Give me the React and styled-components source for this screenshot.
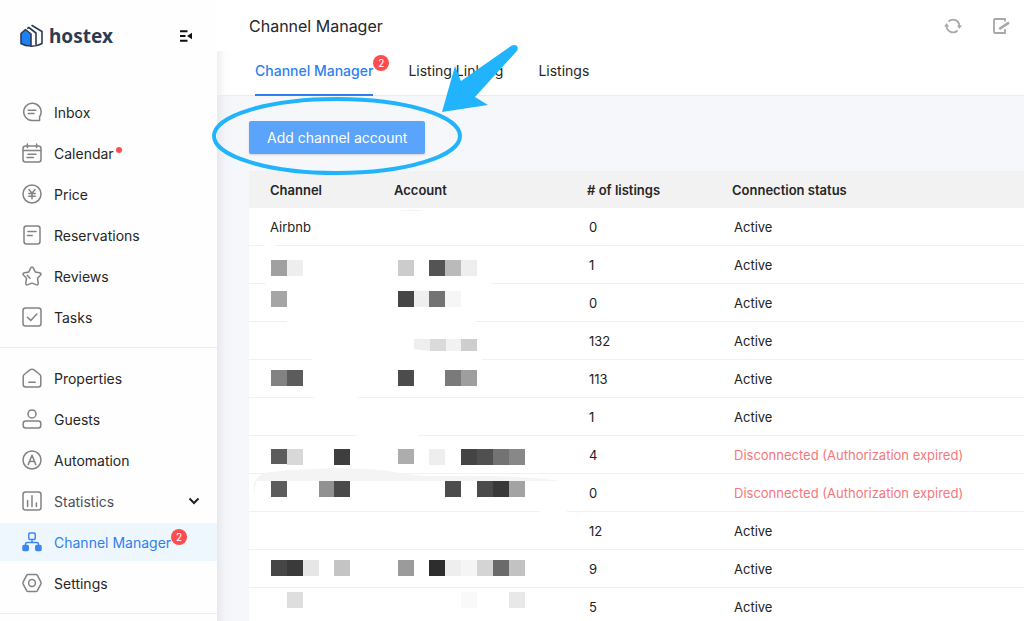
import React from 'react'
import styled, { createGlobalStyle } from 'styled-components'

const mainMenu = [
    { label: 'Inbox', icon: 'inbox' },
    { label: 'Calendar', icon: 'calendar', dot: true },
    { label: 'Price', icon: 'price' },
    { label: 'Reservations', icon: 'reservations' },
    { label: 'Reviews', icon: 'reviews' },
    { label: 'Tasks', icon: 'tasks' },
]

const manageMenu = [
    { label: 'Properties', icon: 'properties' },
    { label: 'Guests', icon: 'guests' },
    { label: 'Automation', icon: 'automation' },
    { label: 'Statistics', icon: 'statistics', expandable: true },
    { label: 'Channel Manager', icon: 'channel', active: true, count: 2 },
    { label: 'Settings', icon: 'settings' },
]

const rows = [
    { channel: 'Airbnb', listings: 0 },
    { listings: 1 },
    { listings: 0 },
    { listings: 132 },
    { listings: 113 },
    { listings: 1 },
    { listings: 4, expired: true },
    { listings: 0, expired: true },
    { listings: 12 },
    { listings: 9 },
    { listings: 5 },
]

// masked names: [x, y, height, grey level], relative to the table
const mosaic = [
    [22, 89, 16, 160], [38, 89, 16, 238], [149, 89, 16, 204], [180, 89, 16, 84], [196, 89, 16, 186], [212, 89, 16, 238],
    [22, 120, 16, 165], [149, 120, 16, 70], [165, 120, 16, 238], [180, 120, 16, 115], [196, 120, 16, 246],
    [22, 199, 16, 130], [38, 199, 16, 92], [149, 199, 16, 76], [196, 199, 16, 122], [212, 199, 16, 158],
    [22, 278, 15, 92], [38, 278, 16, 216], [85, 278, 16, 62], [149, 278, 15, 173], [180, 278, 16, 238],
    [212, 278, 16, 68], [228, 278, 16, 80], [244, 278, 16, 115], [260, 278, 16, 136],
    [22, 310, 16, 92], [70, 310, 16, 145], [85, 310, 16, 74], [196, 310, 16, 76], [228, 310, 16, 74], [244, 310, 16, 56], [260, 310, 16, 163],
    [22, 389, 16, 70], [38, 389, 16, 58], [54, 389, 16, 230], [85, 389, 16, 196], [149, 389, 16, 155], [180, 389, 16, 45],
    [196, 389, 16, 238], [212, 389, 16, 245], [228, 389, 16, 212], [244, 389, 16, 106], [260, 389, 16, 194],
    [38, 421, 16, 222], [212, 421, 16, 249], [260, 421, 16, 232],
]

// stretches where the row lines are wiped out: [x, y, width]
const wiped = [
    [16, 73, 10], [17, 111, 225], [38, 149, 188], [63, 187, 170],
    [65, 225, 44], [108, 263, 61], [291, 339, 27],
]

function Icon({ name }) {
    return (
        <IconSvg viewBox="0 0 20 20" aria-hidden="true">
            {name === 'inbox' && (
                <>
                    <path d="M17.6 14.8V18.6H10A8.7 8.7 0 1 1 17.6 14.8Z" />
                    <path d="M6.2 8.3h7.6M6.2 11.6h5.8" />
                </>
            )}
            {name === 'calendar' && (
                <>
                    <rect x="1" y="3" width="18" height="16" rx="2.5" />
                    <path d="M1.5 7.4h17M5.4 1v3.6M14.6 1v3.6M6 11.2h8M5 14.6h6.4" />
                </>
            )}
            {name === 'price' && (
                <>
                    <circle cx="10" cy="10" r="9" />
                    <path d="M7 5.6 10 9.2l3-3.6M10 9.2v5.6M6.800 9.600h6.400M6.800 12.200h6.400" />
                </>
            )}
            {name === 'reservations' && (
                <>
                    <rect x="2" y="1" width="16" height="18" rx="2.5" />
                    <path d="M6 6.6h8M5.4 10.4h4.8" />
                </>
            )}
            {name === 'reviews' && (
                <>
                    <path d="M10 1.1Q10.9 1.1 11.4 2.2L13.2 5.9 17.4 6.8Q20 7.5 18.4 9.3L15.5 12.3 16.2 17Q16.2 19.6 14 18.6L10 17.1 6 18.6Q3.8 19.6 3.8 17L4.5 12.3 1.6 9.3Q0 7.5 2.6 6.8L6.8 5.9 8.6 2.2Q9.1 1.1 10 1.1Z" />
                    <path d="M5.2 9.2 8 12.2" />
                </>
            )}
            {name === 'tasks' && (
                <>
                    <rect x="1" y="1" width="18" height="18" rx="2.5" />
                    <path d="m5.4 10.2 3.4 3.2 6-6.4" />
                </>
            )}
            {name === 'properties' && (
                <>
                    <path d="M1.2 8.5Q1.2 7.3 2.2 6.5L8.3 1.7Q10 .6 11.7 1.7L17.8 6.5Q18.8 7.3 18.8 8.5V16.5Q18.8 19 16.3 19H3.7Q1.2 19 1.2 16.5Z" />
                    <path d="M6.8 14.2h6.4" />
                </>
            )}
            {name === 'guests' && (
                <>
                    <circle cx="10" cy="4.9" r="4" />
                    <rect x="1.2" y="12" width="17.6" height="7" rx="2.5" />
                </>
            )}
            {name === 'automation' && (
                <>
                    <circle cx="10" cy="10" r="9" />
                    <path d="M6.2 14.6 10 5.2l3.8 9.4M7.4 11.6h5.2" />
                </>
            )}
            {name === 'statistics' && (
                <>
                    <rect x="1" y="1" width="18" height="18" rx="2.5" />
                    <path d="M5.6 9.5v6M10 4.8v10.7M14.4 12v3.5" />
                </>
            )}
            {name === 'channel' && (
                <>
                    <rect x="6.8" y="1" width="6.4" height="6.4" rx="1" />
                    <path d="M10 7.4v3M3.5 13.4v-1.2Q3.5 10.4 5.3 10.4H14.7Q16.5 10.4 16.5 12.2v1.2" />
                    <rect x="1" y="13.6" width="5.2" height="5" rx="1" fill="currentColor" />
                    <rect x="13.8" y="13.6" width="5.2" height="5" rx="1" fill="currentColor" />
                </>
            )}
            {name === 'settings' && (
                <>
                    <path d="M6.2 1.5H13.8Q14.9 1.5 15.4 2.4L18.8 8.9Q19.3 10 18.8 11.1L15.4 17.6Q14.9 18.5 13.8 18.5H6.2Q5.1 18.5 4.6 17.6L1.2 11.1Q.7 10 1.2 8.9L4.6 2.4Q5.1 1.5 6.2 1.5Z" />
                    <circle cx="10" cy="10" r="3.4" />
                </>
            )}
        </IconSvg>
    )
}

function Menu({ items }) {
    return (
        <MenuList>
            {items.map((item) => (
                <li key={item.label}>
                    <MenuLink href="#" $active={item.active} $muted={item.expandable}>
                        <Icon name={item.icon} />
                        <Label>
                            {item.label}
                            {item.dot && <Dot />}
                            {item.count && <MenuBadge>{item.count}</MenuBadge>}
                        </Label>
                        {item.expandable && (
                            <Chevron viewBox="0 0 12 8" aria-hidden="true">
                                <path d="m1.5 1.5 4.5 4.5 4.5-4.5" />
                            </Chevron>
                        )}
                    </MenuLink>
                </li>
            ))}
        </MenuList>
    )
}

function Sidebar() {
    return (
        <Side>
            <Brand>
                <BrandLink href="#">
                    <LogoMark viewBox="0 0 23 24" aria-hidden="true">
                        <path d="M1 9.5 5.5 5.5 11 10V22Q5 22 1 19.5Z" fill="#1c82f4" />
                        <path d="M7.8 4.2 8.8 3.5 16 9V20.5M12 1.5 22 7.5V19.5Q17 22.5 11 22.3" />
                    </LogoMark>
                    <span>hostex</span>
                </BrandLink>
                <IconButton aria-label="Collapse menu">
                    <FoldSvg viewBox="0 0 12 12" aria-hidden="true">
                        <path d="M0 1.2h7.5M0 6h5.5M0 10.8h7.5" stroke="#111" strokeWidth="2" />
                        <path d="M12 2.8v6.4L7 6z" fill="#111" />
                    </FoldSvg>
                </IconButton>
            </Brand>
            <nav>
                <Menu items={mainMenu} />
                <Menu items={manageMenu} />
            </nav>
        </Side>
    )
}

function ChannelTable() {
    return (
        <TableWrap>
            <Table>
                <thead>
                    <tr>
                        <Th $w="124px">Channel</Th>
                        <Th $w="193px">Account</Th>
                        <Th $w="145px"># of listings</Th>
                        <Th>Connection status</Th>
                    </tr>
                </thead>
                <tbody>
                    {rows.map((row, i) => (
                        <tr key={i}>
                            <Td>{row.channel}</Td>
                            <Td />
                            <Td $inset>{row.listings}</Td>
                            <Td $inset $expired={row.expired}>
                                {row.expired ? 'Disconnected (Authorization expired)' : 'Active'}
                            </Td>
                        </tr>
                    ))}
                </tbody>
            </Table>
            <MaskSvg width="330" height="450" viewBox="0 0 330 450" aria-hidden="true">
                {wiped.map(([x, y, w]) => (
                    <rect key={y} x={x} y={y} width={w} height="3" fill="#fff" />
                ))}
                <path d="M5 322Q3 302 22 301Q90 294 140 300Q165 306 200 305Q270 304 312 310H8Q6 314 5 322Z" fill="#f4f4f4" />
                <path d="M146 40q16-2 32 0z" fill="#f1f1f1" />
                <path d="M165 168H181V180Q172 179 165 178Z" fill="#eee" />
                <path d="M181 168H197V180H181Z" fill="#dadada" />
                <path d="M197 168H212V180H197Z" fill="#f2f2f2" />
                <path d="M212 168H228V180H212Z" fill="#cecece" />
                {mosaic.map(([x, y, h, g]) => (
                    <rect key={`${x}-${y}`} x={x} y={y} width="16" height={h} fill={`rgb(${g},${g},${g})`} />
                ))}
            </MaskSvg>
        </TableWrap>
    )
}

function App() {
    return (
        <Shell>
            <GlobalStyle />
            <Sidebar />
            <Main>
                <Header>
                    <h1>Channel Manager</h1>
                    <Actions>
                        <IconButton aria-label="Refresh">
                            <ActionSvg viewBox="0 0 18 18" aria-hidden="true">
                                <path d="M4.5 4.5A6.4 6.4 0 0 1 15.4 9M13.5 13.5A6.4 6.4 0 0 1 2.6 9" />
                                <path d="M0 9.6 2.6 6.2 5.2 9.6ZM12.800 8.400 15.400 11.800 18 8.400Z" fill="currentColor" stroke="none" />
                            </ActionSvg>
                        </IconButton>
                        <IconButton aria-label="Edit">
                            <ActionSvg viewBox="0 0 18 18" aria-hidden="true">
                                <path d="M13 4.500V2H3Q2 2 2 3V15Q2 16 3 16H13V12" />
                                <path d="M7.200 12 17 5.600" strokeWidth="2.600" />
                            </ActionSvg>
                        </IconButton>
                    </Actions>
                </Header>
                <Body>
                    <Tabs>
                        <Tab href="#" $active>
                            Channel Manager
                            <TabBadge>2</TabBadge>
                        </Tab>
                        <Tab href="#">Listing Linking</Tab>
                        <Tab href="#">Listings</Tab>
                    </Tabs>
                    <Content>
                        <ButtonSpot>
                            <AddButton>Add channel account</AddButton>
                            <CalloutSvg width="310" height="134" viewBox="0 0 310 134" aria-hidden="true">
                                <ellipse cx="127" cy="95" rx="123" ry="37" fill="none" stroke="#21b4fd" strokeWidth="4" />
                                <path d="M232 71 245 25 251 40 301 5Q305 3 307 5Q309 8 306 11L265 56 278 64Z" fill="#21b4fd" />
                            </CalloutSvg>
                        </ButtonSpot>
                        <ChannelTable />
                    </Content>
                </Body>
            </Main>
        </Shell>
    )
}

export default App

const GlobalStyle = createGlobalStyle`
* {
    box-sizing: border-box;
}

body {
    margin: 0;
    font-family: Inter, 'Liberation Sans', sans-serif;
    font-size: 14px;
    color: #262626;
    background: #fff;
}

a {
    color: inherit;
    text-decoration: none;
}
`
const Shell = styled.div`
display: flex;
height: 100vh;
overflow: hidden;
`
const Side = styled.aside`
flex: 0 0 217px;
background: #fefefe;
`
const Brand = styled.div`
display: flex;
align-items: center;
justify-content: space-between;
height: 71px;
padding: 0 25px 0 20px;
`
const BrandLink = styled.a`
display: flex;
align-items: center;
gap: 6px;
font-family: 'Noto Sans', sans-serif;
font-size: 19px;
font-weight: 700;
line-height: 24px;
color: #2d3b52;
`
const LogoMark = styled.svg`
width: 23px;
height: 24px;
fill: none;
stroke: #2d3b52;
stroke-width: 1.6;
stroke-linejoin: round;
stroke-linecap: round;
`
const IconButton = styled.button`
display: flex;
padding: 0;
border: none;
background: none;
color: #a8a8a8;
cursor: pointer;
`
const FoldSvg = styled.svg`
width: 12px;
height: 12px;
`
const MenuList = styled.ul`
display: flex;
flex-direction: column;
gap: 3px;
margin: 0;
padding: 11px 0;
list-style: none;
border-bottom: 1px solid #ececec;

&:first-child {
    padding-top: 22px;
}
`
const MenuLink = styled.a`
display: flex;
align-items: center;
gap: 12px;
height: 38px;
padding: 0 17px 0 22px;
color: ${(p) => (p.$active ? '#2f7ff0' : p.$muted ? '#4b4f5c' : '#262626')};
background: ${(p) => (p.$active ? '#eff7fe' : 'none')};

> svg:first-child {
    color: ${(p) => (p.$active ? '#3d86f0' : '#828282')};
}
`
const IconSvg = styled.svg`
flex: none;
width: 20px;
height: 20px;
fill: none;
stroke: currentColor;
stroke-width: 1.5;
stroke-linecap: round;
stroke-linejoin: round;
`
const Label = styled.span`
position: relative;
white-space: nowrap;
`
const Dot = styled.i`
position: absolute;
top: 2px;
right: -8px;
width: 6px;
height: 6px;
border-radius: 50%;
background: #ff4d4f;
`
const Badge = styled.span`
position: absolute;
width: 16px;
height: 16px;
border-radius: 50%;
background: #ff4d4f;
color: #fff;
font-size: 10px;
font-weight: 400;
line-height: 16px;
text-align: center;
`
const MenuBadge = styled(Badge)`
top: -5px;
right: -16px;
`
const TabBadge = styled(Badge)`
top: 4px;
right: -16px;
`
const Chevron = styled.svg`
width: 12px;
height: 8px;
margin-left: auto;
fill: none;
stroke: #222;
stroke-width: 2;
`
const Main = styled.main`
display: flex;
flex: 1;
flex-direction: column;
min-width: 0;
`
const Header = styled.header`
display: flex;
flex: none;
align-items: center;
justify-content: space-between;
height: 51px;
padding: 0 14px 0 32px;

h1 {
    margin: 0;
    font-size: 16px;
    font-weight: 400;
}
`
const Actions = styled.div`
display: flex;
gap: 30px;
`
const ActionSvg = styled.svg`
width: 18px;
height: 18px;
fill: none;
stroke: currentColor;
stroke-width: 1.8;
`
const Body = styled.div`
display: flex;
flex: 1;
flex-direction: column;
background: linear-gradient(to right, rgba(0, 0, 0, 0.06), rgba(0, 0, 0, 0.04) 3px, rgba(0, 0, 0, 0.01) 8px, transparent 16px), #f6f7fa;
`
const Tabs = styled.nav`
display: flex;
flex: none;
gap: 35px;
height: 45px;
padding: 0 38px;
background: linear-gradient(to right, #efefef, #f4f4f4 3px, #fdfdfd 8px, #fff 16px);
box-shadow: inset 0 -1px #ececec;
`
const Tab = styled.a`
position: relative;
height: 45px;
font-size: 14px;
line-height: 40px;
white-space: nowrap;
color: ${(p) => (p.$active ? '#2f7ff0' : '#262626')};
font-weight: ${(p) => (p.$active ? 500 : 400)};
border-bottom: 2px solid ${(p) => (p.$active ? '#2f7ff0' : 'transparent')};
`
const Content = styled.section`
padding: 25px 0 0 32px;
`
const ButtonSpot = styled.div`
position: relative;
z-index: 1;
width: fit-content;
margin-bottom: 17px;
`
const AddButton = styled.button`
display: block;
height: 33px;
padding: 0 18px;
border: none;
border-radius: 2px;
background: #5aa4fb;
box-shadow: 0 1px 2px rgba(0, 0, 0, 0.15);
color: #fff;
font-family: inherit;
font-size: 14px;
cursor: pointer;
`
const CalloutSvg = styled.svg`
position: absolute;
left: -39px;
top: -80px;
overflow: visible;
pointer-events: none;
`
const TableWrap = styled.div`
position: relative;
`
const Table = styled.table`
width: 100%;
table-layout: fixed;
border-collapse: separate;
border-spacing: 0;
font-size: 13px;
line-height: 16px;
background: #fff;
`
const Th = styled.th`
width: ${(p) => p.$w || 'auto'};
height: 37px;
padding: 0 0 0 21px;
font-weight: 600;
text-align: left;
background: #f2f2f2;
`
const Td = styled.td`
height: 38px;
padding: 0 0 0 ${(p) => (p.$inset ? '23px' : '21px')};
white-space: nowrap;
border-bottom: 1px solid #f1f1f1;
color: ${(p) => (p.$expired ? '#f5777b' : '#222')};
`
const MaskSvg = styled.svg`
position: absolute;
left: 0;
top: 0;
`
